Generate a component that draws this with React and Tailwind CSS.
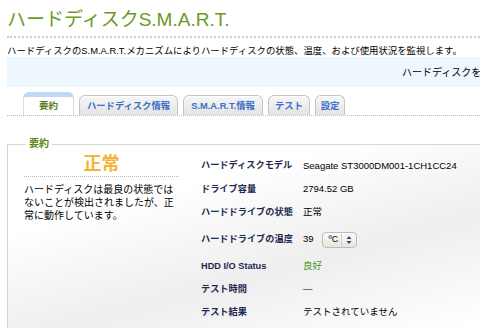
import React from "react";

const rows = [
  { label: "ハードディスクモデル", value: "Seagate ST3000DM001-1CH1CC24", h: "h-[24px]" },
  { label: "ドライブ容量", value: "2794.52 GB", h: "h-[23px]" },
  { label: "ハードドライブの状態", value: "正常", h: "h-[23px]" },
  { label: "ハードドライブの温度", value: "temp", h: "h-[31px]" },
  { label: "HDD I/O Status", value: "良好", h: "h-[23px]", green: true },
  { label: "テスト時間", value: "—", h: "h-[23px]" },
  { label: "テスト結果", value: "テストされていません", h: "h-[23px]" },
];

const tabs = [
  { name: "要約", active: true, w: "w-[51px]" },
  { name: "ハードディスク情報", w: "w-[99px]" },
  { name: "S.M.A.R.T.情報", w: "w-[80px]" },
  { name: "テスト", w: "w-[42px]" },
  { name: "設定", w: "w-[30px]" },
];

function UnitSelect() {
  return (
    <div className="ml-[8px] flex h-[16px] w-[35px] items-center rounded-[4px] border border-[#bdbdb5] bg-gradient-to-b from-[#fbfbf8] to-[#e6e6e0] text-[9px] text-black">
      <span className="pl-[6px] pr-[3px] leading-none">ºC</span>
      <span className="h-[12px] border-l border-[#d0d0c8]" />
      <svg width="8" height="10" viewBox="0 0 8 10" className="ml-[3px]">
        <path d="M4 1 L6.5 4 L1.5 4 Z" fill="#2b4a86" />
        <path d="M4 9 L6.5 6 L1.5 6 Z" fill="#2b4a86" />
      </svg>
    </div>
  );
}

export default function App() {
  return (
    <div className="h-[328px] w-[480px] overflow-hidden bg-white font-['Liberation_Sans','Noto_Sans_CJK_JP',sans-serif] text-black">
      <div className="w-[600px] pl-[7px]">
        <h1 className="pt-[8px] text-[19px] leading-[24px] text-[#6a9a1f]">ハードディスクS.M.A.R.T.</h1>
        <div className="mt-[4px] border-b-2 border-dotted border-[#cdcdcd]" />
        <p className="mt-[7px] text-[9.4px] leading-[12px]">
          ハードディスクのS.M.A.R.T.メカニズムによりハードディスクの状態、温度、および使用状況を監視します。
        </p>
        <div className="flex h-[30px] items-center overflow-hidden whitespace-nowrap bg-[#eff7fe] pl-[395px] text-[10px]">
          ハードディスクを有効にしてください。
        </div>

        <div className="mt-[5px] flex items-end gap-[5px] pl-[16px]">
          {tabs.map((t) =>
            t.active ? (
              <div
                key={t.name}
                className={`${t.w} flex h-[23px] items-center justify-center rounded-t-[6px] border border-b-0 border-t-[5px] border-[#d6dde4] border-t-[#bcdaf3] bg-white pt-[1px] text-[9.5px] font-bold text-[#5b7d22]`}
              >
                {t.name}
              </div>
            ) : (
              <div
                key={t.name}
                className={`${t.w} flex h-[20px] items-center justify-center rounded-t-[6px] border border-b-0 border-[#c4c4c4] bg-gradient-to-b from-[#f7f7f7] to-[#e3e3e3] pt-[2px] text-[9.3px] font-bold text-[#3d6fc6] shadow-[inset_0_1px_0_#fff]`}
              >
                {t.name}
              </div>
            )
          )}
        </div>
        <div className="border-b border-dotted border-[#bdbdbd]" />

        <fieldset className="mt-[22px] border border-[#d6d6d6] bg-[linear-gradient(165deg,#ffffff_25%,#eeeeee_55%,#ffffff_85%)] pl-[16px] pb-[20px]">
          <legend className="ml-[2px] px-[3px] text-[10px] font-bold leading-[12px] text-[#5c8a1a]">要約</legend>
          <div className="flex">
            <div className="w-[155px] pt-[3px]">
              <div className="text-center text-[18px] font-bold leading-[22px] text-[#f5b335]">正常</div>
              <div className="mt-[1px] border-b border-dotted border-[#bbbbbb]" />
              <p className="mt-[6px] text-[10px] leading-[13px]">
                ハードディスクは最良の状態ではないことが検出されましたが、正常に動作しています。
              </p>
            </div>
            <div className="ml-[22px] mt-[4px]">
              {rows.map((r) => (
                <div key={r.label} className={`flex items-center ${r.h}`}>
                  <div className="w-[102px] text-[9.2px] font-bold text-[#1c2950]">{r.label}</div>
                  {r.value === "temp" ? (
                    <div className="flex items-center text-[9.5px]">
                      <span>39</span>
                      <UnitSelect />
                    </div>
                  ) : (
                    <div className={`text-[9.5px] ${r.green ? "text-[#4f9a2c]" : "text-black"}`}>{r.value}</div>
                  )}
                </div>
              ))}
            </div>
          </div>
        </fieldset>
      </div>
    </div>
  );
}
